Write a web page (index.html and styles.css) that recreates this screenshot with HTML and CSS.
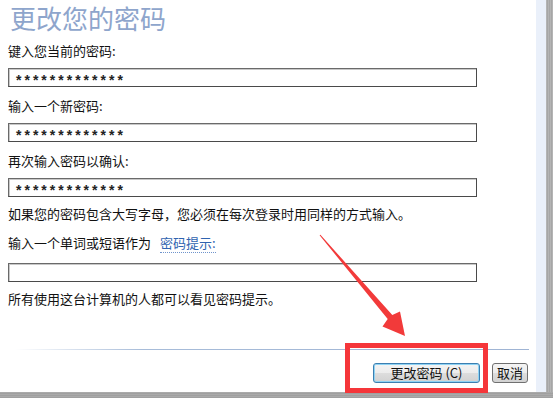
FILE: index.html
```html
<!DOCTYPE html>
<html lang="zh-CN">
<head>
<meta charset="utf-8">
<title>更改您的密码</title>
<link rel="stylesheet" href="styles.css">
</head>
<body>
<div class="screen">
  <div class="window">
    <div class="panel">
      <h1 class="title">更改您的密码</h1>
      <div class="field">
        <div class="label">键入您当前的密码:</div>
        <div class="input"><span class="stars">*************</span></div>
      </div>
      <div class="field">
        <div class="label">输入一个新密码:</div>
        <div class="input"><span class="stars">*************</span></div>
      </div>
      <div class="field">
        <div class="label">再次输入密码以确认:</div>
        <div class="input"><span class="stars">*************</span></div>
      </div>
      <p class="note">如果您的密码包含大写字母，您必须在每次登录时用同样的方式输入。</p>
      <div class="field hint">
        <div class="label">输入一个单词或短语作为 <span class="link">密码提示:</span></div>
        <div class="input"></div>
      </div>
      <p class="note last">所有使用这台计算机的人都可以看见密码提示。</p>
      <div class="footer">
        <div class="separator"></div>
        <div class="buttons">
          <button class="btn default">更改密码 (<u>C</u>)</button>
          <button class="btn cancel">取消</button>
        </div>
      </div>
    </div>
    <div class="edge"></div>
    <div class="shadow"></div>
  </div>
  <div class="bottom"></div>

  <div class="mark"></div>
  <svg class="arrow" width="553" height="398" viewBox="0 0 553 398">
    <polygon points="320.4,234.7 392.3,315.1 400,311.5 405,336 382.5,326.5 387.7,318.9 319.6,235.3" fill="#f23a3a"/>
  </svg>
</div>
</body>
</html>
```

FILE: styles.css
```css
html, body {
  margin: 0;
  padding: 0;
}

body {
  width: 553px;
  height: 398px;
  overflow: hidden;
  background: #a3a3a3;
  font-family: "Noto Sans CJK SC", "Liberation Sans", sans-serif;
  font-size: 13px;
  color: #111;
}

.screen {
  position: relative;
  width: 553px;
  height: 398px;
}

.window {
  display: flex;
  height: 392px;
}

.panel {
  width: 536px;
  background: #fff;
  display: flex;
  flex-direction: column;
  padding-left: 8px;
  padding-top: 2px;
  box-sizing: border-box;
}

.edge {
  width: 10px;
  background: #eaf0fa;
}

.shadow {
  width: 7px;
  background: repeating-linear-gradient(90deg, #b4b4b4 0 1px, #a6a6a6 1px 2px);
}

.bottom {
  height: 6px;
  background: repeating-linear-gradient(0deg, #a0a0a0 0 1px, #aaaaaa 1px 2px);
}

.title {
  margin: 0 0 0 2px;
  font-size: 26px;
  line-height: 32px;
  height: 32px;
  font-weight: normal;
  color: #8ea5cc;
  letter-spacing: 0;
}

.field {
  display: flex;
  flex-direction: column;
}

.label {
  margin-top: 9px;
  line-height: 16px;
  height: 16px;
}

.field + .field .label {
  margin-top: 11px;
}

.input {
  margin-top: 9px;
  width: 469px;
  height: 19px;
  box-sizing: border-box;
  border: 1px solid #4a4a4a;
  border-top-color: #6a6a6a;
  border-left-color: #6a6a6a;
  box-shadow: inset 1px 1px 0 #c8c8c8;
  background: #fff;
  display: flex;
  align-items: center;
  padding-left: 7px;
}

.stars {
  font-family: "Liberation Sans", sans-serif;
  font-size: 14px;
  font-weight: bold;
  letter-spacing: 3px;
  line-height: 14px;
  padding-top: 4px;
  color: #222;
}

.note {
  margin: 9px 0 0;
  line-height: 16px;
}

.hint .label {
  margin-top: 13px;
}

.hint .input {
  margin-top: 12px;
}

.note.last {
  margin-top: 9px;
}

.link {
  color: #2f63b0;
  margin-left: 6px;
  border-bottom: 1px dotted #6f94cc;
}

.footer {
  margin-top: auto;
  padding-bottom: 9px;
}

.separator {
  margin-left: 7px;
  width: 514px;
  height: 1px;
  background: linear-gradient(90deg, rgba(160, 182, 214, 0) 0%, #a7bcd9 25%, #9fb4d4 100%);
}

.buttons {
  margin-top: 13px;
  display: flex;
  justify-content: flex-end;
  gap: 12px;
  padding-right: 8px;
}

.btn {
  height: 20px;
  box-sizing: border-box;
  border-radius: 3px;
  border: 1px solid #707070;
  background: linear-gradient(#f4f4f4 0%, #ececec 50%, #dddddd 51%, #d2d2d2 100%);
  font-family: "Noto Sans CJK SC", "Liberation Sans", sans-serif;
  font-size: 13px;
  line-height: 16px;
  color: #111;
  padding: 0;
}

.btn.default {
  width: 107px;
  border-color: #3c7fb1;
  box-shadow: inset 0 0 0 1px #8fd3f4;
}

.btn.cancel {
  width: 36px;
}

.btn u {
  text-decoration: none;
}

.mark {
  position: absolute;
  left: 345px;
  top: 343px;
  width: 143px;
  height: 50px;
  box-sizing: border-box;
  border: 5px solid #f5363a;
}

.arrow {
  position: absolute;
  left: 0;
  top: 0;
}
```
